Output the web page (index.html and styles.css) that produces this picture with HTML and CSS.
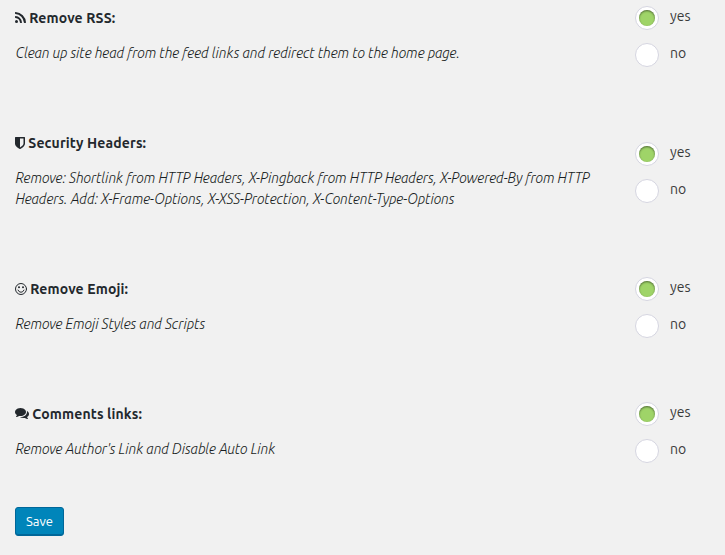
FILE: index.html
```html
<!DOCTYPE html>
<html lang="en">
<head>
<meta charset="utf-8">
<title>Settings</title>
<link rel="stylesheet" href="styles.css">
</head>
<body>
<form class="settings">
  <section class="row">
    <div class="info">
      <h2 class="title"><svg class="icon rss" viewBox="0 0 1408 1408"><path d="M384 1216a192 192 0 1 1-384 0 192 192 0 0 1 384 0zM896 1339a64 64 0 0 1-64 69H697a64 64 0 0 1-64-58A635 635 0 0 0 58 775a64 64 0 0 1-58-64V576a64 64 0 0 1 69-64 896 896 0 0 1 827 827zM1408 1341a64 64 0 0 1-64 67h-143a64 64 0 0 1-64-60A1145 1145 0 0 0 60 271 64 64 0 0 1 0 207V64A64 64 0 0 1 67 0a1408 1408 0 0 1 1341 1341z"/></svg><span class="name">Remove RSS:</span></h2>
      <p class="desc">Clean up site head from the feed links and redirect them to the home page.</p>
    </div>
    <div class="choices"><label class="choice"><i class="radio on"></i><span>yes</span></label><label class="choice"><i class="radio"></i><span>no</span></label></div>
  </section>
  <section class="row">
    <div class="info">
      <h2 class="title"><svg class="icon shield" viewBox="0 0 1280 1536"><path d="M1088 832V192H640v1137q119-63 213-137 235-184 235-360zM1280 64v768q0 86-33 170t-83 150-118 127-126 103-121 77-89 49-43 20q-12 6-27 6t-27-6q-15-7-43-20t-89-49-121-77-126-103-118-127-83-150T0 832V64Q0 38 19 19T64 0h1152q26 0 45 19t19 45z"/></svg><span class="name">Security Headers:</span></h2>
      <p class="desc">Remove: Shortlink from HTTP Headers, X-Pingback from HTTP Headers, X-Powered-By from HTTP<br>Headers. Add: X-Frame-Options, X-XSS-Protection, X-Content-Type-Options</p>
    </div>
    <div class="choices"><label class="choice"><i class="radio on"></i><span>yes</span></label><label class="choice"><i class="radio"></i><span>no</span></label></div>
  </section>
  <section class="row">
    <div class="info">
      <h2 class="title"><svg class="icon smile" viewBox="0 0 24 24"><circle class="line" cx="12" cy="12" r="11"/><circle cx="8" cy="8.5" r="2"/><circle cx="16" cy="8.5" r="2"/><path class="line" d="M6 14.2q1.8 4.3 6 4.3t6-4.3"/></svg><span class="name">Remove Emoji:</span></h2>
      <p class="desc">Remove Emoji Styles and Scripts</p>
    </div>
    <div class="choices"><label class="choice"><i class="radio on"></i><span>yes</span></label><label class="choice"><i class="radio"></i><span>no</span></label></div>
  </section>
  <section class="row last">
    <div class="info">
      <h2 class="title"><svg class="icon chat" viewBox="0 0 1792 1408"><path d="M1408 512q0 139-94 257t-257 187-353 68q-86 0-176-16-124 88-278 128-36 9-86 16h-3q-11 0-20-8t-12-21c-3-16 9-29 17-38 44-50 74-77 109-177Q137 838 69 735T0 512q0-139 94-257T351 68 704 0t353 68 257 187 94 257zM1792 768q0 120-68 223t-187 173c33 95 65 127 109 177 8 9 20 22 17 38q-3 14-13 22t-22 7q-50-7-86-16-154-40-278-128-90 16-176 16-271 0-472-132 58 4 88 4 161 0 309-45t264-129q125-92 192-212t67-254q0-77-23-152 129 71 204 178t75 230z"/></svg><span class="name">Comments links:</span></h2>
      <p class="desc">Remove Author's Link and Disable Auto Link</p>
    </div>
    <div class="choices"><label class="choice"><i class="radio on"></i><span>yes</span></label><label class="choice"><i class="radio"></i><span>no</span></label></div>
  </section>
  <button class="save" type="button">Save</button>
</form>
</body>
</html>
```

FILE: styles.css
```css
* { box-sizing: border-box; }
body {
  margin: 0;
  background: #f1f1f1;
  color: #23282d;
  font: 14px/21px "Ubuntu", "Noto Sans", sans-serif;
}
.settings { padding: 6px 15px 0; }
.row {
  display: grid;
  grid-template-columns: 620px 1fr;
  align-items: center;
  margin-bottom: 64px;
}
.row.last { margin-bottom: 44px; }
.info { padding: 2px 0 3px; }
.title {
  display: flex;
  align-items: center;
  margin: 0 0 14px;
  font-size: 14px;
  line-height: 21px;
  font-weight: 700;
}
.icon { display: block; flex: none; margin: 0 3px 2px 0; fill: #23282d; }
.rss { width: 11px; height: 11px; }
.shield { width: 10px; height: 12px; }
.smile { width: 12px; height: 12px; }
.chat { width: 14px; height: 11px; }
.line { fill: none; stroke: #23282d; stroke-width: 2; stroke-linecap: round; }
.name { letter-spacing: .13px; margin-left: .3px; }
.desc {
  margin: 0;
  padding-left: .5px;
  font-style: italic;
  font-weight: 300;
  letter-spacing: -.07px;
  white-space: nowrap;
  color: #181d22;
}
.choices { display: grid; gap: 13px; }
.choice { display: flex; height: 24px; line-height: 21px; color: #3a3a3a; }
.radio {
  width: 24px;
  height: 24px;
  margin-right: 11px;
  border: 1px solid #d5d5e0;
  border-radius: 50%;
  background: #fff;
}
.radio.on::before {
  content: "";
  display: block;
  width: 16px;
  height: 16px;
  margin: 3px;
  border-radius: 50%;
  background: #9fd468;
  box-shadow: inset 0 1px 2px rgba(0, 0, 0, .5);
}
.save {
  display: block;
  width: 49px;
  height: 29px;
  padding: 0;
  border: 1px solid #006799;
  border-radius: 3px;
  background: #0085ba;
  box-shadow: inset 0 -1px #006799;
  color: #fff;
  font: 13px/25px "Ubuntu", "Noto Sans", sans-serif;
}
```
